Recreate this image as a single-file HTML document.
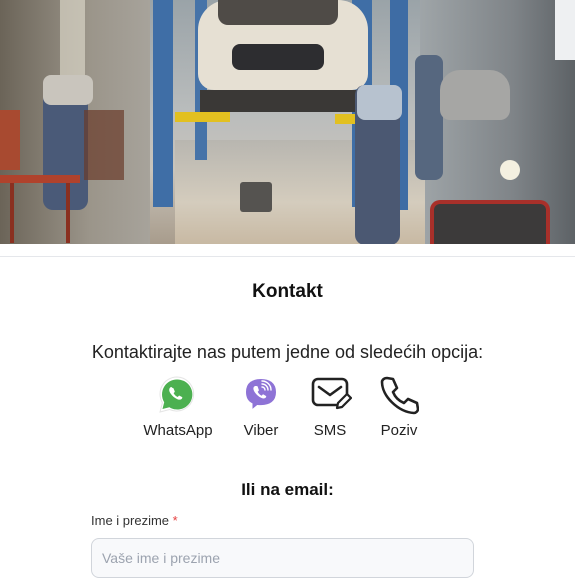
<!DOCTYPE html>
<html><head><meta charset="utf-8"><style>
*{margin:0;padding:0;box-sizing:border-box}
body{width:575px;height:555px;overflow:hidden;background:#fff;font-family:"Liberation Sans","DejaVu Sans",sans-serif;color:#111;position:relative}
.hero{position:absolute;left:0;top:0;width:575px;height:244px;overflow:hidden;background:linear-gradient(180deg,#9aa3a8 0%,#b9bcbc 45%,#c9c4bb 70%,#a89c8c 100%)}
.hero div{position:absolute}
.sep{position:absolute;left:0;top:256px;width:575px;height:1px;background:#e5e7eb}
.t{position:absolute;left:0;width:575px;text-align:center}
.ic{position:absolute;top:375px}
.lb{position:absolute;top:422px;font-size:15px;color:#222;text-align:center;width:90px}
</style></head><body>
<div class="hero">
  <div style="left:0;top:0;width:150px;height:244px;background:linear-gradient(90deg,#6b6458,#9b958a 60%,#a7a39b)"></div>
  <div style="left:60px;top:0;width:25px;height:80px;background:#d8d4c6;opacity:.7"></div>
  <div style="left:420px;top:0;width:155px;height:244px;background:linear-gradient(90deg,#9fa5a8,#7f8488 60%,#5d6266)"></div>
  <div style="left:175px;top:140px;width:250px;height:104px;background:linear-gradient(180deg,#b8b6b0,#d4ccbd 60%,#c8b9a3)"></div>
  <div style="left:153px;top:0;width:20px;height:207px;background:#3f6ea6"></div>
  <div style="left:195px;top:0;width:12px;height:160px;background:#4673a8"></div>
  <div style="left:352px;top:0;width:20px;height:207px;background:#3f6ea6"></div>
  <div style="left:390px;top:0;width:18px;height:210px;background:#3e6ca4"></div>
  <div style="left:198px;top:0;width:170px;height:90px;background:#e6e0d3;border-radius:30px 30px 16px 16px"></div>
  <div style="left:218px;top:0;width:120px;height:25px;background:#4f4b47;border-radius:0 0 10px 10px"></div>
  <div style="left:232px;top:44px;width:92px;height:26px;background:#2d2d30;border-radius:8px"></div>
  <div style="left:200px;top:90px;width:165px;height:22px;background:#3a3836"></div>
  <div style="left:175px;top:112px;width:55px;height:10px;background:#e2c020"></div>
  <div style="left:335px;top:114px;width:30px;height:10px;background:#e2c020"></div>
  <div style="left:43px;top:80px;width:45px;height:130px;background:#4a5a78;border-radius:10px"></div>
  <div style="left:43px;top:75px;width:50px;height:30px;background:#c9c5bd;border-radius:8px"></div>
  <div style="left:355px;top:85px;width:45px;height:160px;background:#4b5872;border-radius:10px"></div>
  <div style="left:357px;top:85px;width:45px;height:35px;background:#b7c2cf;border-radius:8px"></div>
  <div style="left:415px;top:55px;width:28px;height:125px;background:#56677f;border-radius:8px"></div>
  <div style="left:440px;top:70px;width:70px;height:50px;background:#a6a6a4;border-radius:20px 20px 10px 10px"></div>
  <div style="left:0;top:175px;width:80px;height:8px;background:#b0422c"></div>
  <div style="left:10px;top:183px;width:60px;height:60px;border-left:4px solid #8a3020;border-right:4px solid #8a3020"></div>
  <div style="left:0;top:110px;width:20px;height:60px;background:#a84a30"></div>
  <div style="left:240px;top:182px;width:32px;height:30px;background:#555350;border-radius:3px"></div>
  <div style="left:430px;top:200px;width:120px;height:44px;border:4px solid #a8302a;border-bottom:none;border-radius:10px 10px 0 0;background:#3c3a3a"></div>
  <div style="left:84px;top:110px;width:40px;height:70px;background:#6a3a2a;opacity:.7"></div>
  <div style="left:555px;top:0;width:20px;height:60px;background:#eef0f2"></div>
  <div style="left:500px;top:160px;width:20px;height:20px;background:#f4f0e0;border-radius:50%"></div>
</div>
<div class="sep"></div>
<div class="t" style="top:281px;font-size:19px;font-weight:bold">Kontakt</div>
<div class="t" style="top:342px;font-size:18px;color:#222">Kontaktirajte nas putem jedne od sledećih opcija:</div>

<svg class="ic" style="left:157px" width="40" height="40" viewBox="0 0 40 40">
<path d="M20 2a17 17 0 0 0-14.6 25.7L3 37l9.6-2.5A17 17 0 1 0 20 2z" fill="#fff" stroke="#e5e5e5"/>
<path d="M20 4.5a15 15 0 0 0-12.8 22.8L5.5 34l6.9-1.8A15 15 0 1 0 20 4.5z" fill="#4cb050"/>
<path d="M14.5 12c-.6 0-1.4.4-1.8 1.1-.8 1.3-.6 3.2.8 5.3 1.8 2.7 4.1 4.7 6.9 5.8 2 .8 3.6.5 4.5-.6.4-.5.5-1.2.3-1.5l-2.6-1.4c-.4-.2-.8 0-1 .3l-.8 1c-1.8-.7-3.300-2.1-4.2-3.9l.9-.9c.3-.3.3-.7.2-1l-1.2-2.8c-.2-.4-.6-.5-1.2-.5z" fill="#fff"/>
</svg>
<svg class="ic" style="left:241px" width="40" height="40" viewBox="0 0 40 40">
<path d="M20 3C11 3 4 7 4 17c0 6 2.5 10 6.5 12l0 7 6-5c1 .1 2.3.1 3.5.1 9 0 16-4 16-14S29 3 20 3z" fill="#8e73d6" stroke="#fff" stroke-width="2"/>
<path d="M14.5 11c-.6 0-1.4.4-1.7 1-.8 1.3-.4 3.2 1 5.3 1.8 2.6 4 4.600 6.8 5.7 1.9.8 3.4.5 4.3-.6.4-.5.4-1.1.1-1.4l-2.5-1.5c-.4-.2-.8-.1-1 .2l-.8 1c-1.8-.7-3.2-2.1-4-3.9l.9-.9c.3-.3.3-.7.2-1L16.6 11.4c-.2-.3-.7-.4-2.1-.4z" fill="#fff"/>
<path d="M21 9a6 6 0 0 1 6 6M21 12a3 3 0 0 1 3 3M21 6a9 9 0 0 1 9 9" stroke="#fff" stroke-width="1.4" fill="none" stroke-linecap="round"/>
</svg>
<svg class="ic" style="left:310px" width="42" height="40" viewBox="0 0 42 40">
<path d="M27 30H8a5 5 0 0 1-5-5V9a5 5 0 0 1 5-5h24a5 5 0 0 1 5 5v10" fill="none" stroke="#222" stroke-width="2.6" stroke-linecap="round"/>
<path d="M9 12l11 8 11-8" fill="none" stroke="#222" stroke-width="2.6" stroke-linecap="round" stroke-linejoin="round"/>
<path d="M27 33l1-5 9-9 4 4-9 9z" fill="none" stroke="#222" stroke-width="2.2" stroke-linejoin="round"/>
</svg>
<svg class="ic" style="left:379px" width="40" height="40" viewBox="0 0 40 40">
<path d="M8 3l6 1 4 9-4 4c2 5 6 9 11 11l4-4 9 4 1 6c0 2-2 4-4 4C19 37 3 21 3 7c0-2 2-4 5-4z" fill="none" stroke="#222" stroke-width="2.6" stroke-linejoin="round"/>
</svg>
<div class="lb" style="left:133px">WhatsApp</div>
<div class="lb" style="left:216px">Viber</div>
<div class="lb" style="left:285px">SMS</div>
<div class="lb" style="left:354px">Poziv</div>

<div class="t" style="top:480px;font-size:17px;font-weight:bold">Ili na email:</div>
<div style="position:absolute;left:91px;top:513px;font-size:13px;color:#333">Ime i prezime <span style="color:#e53e3e">*</span></div>
<div style="position:absolute;left:91px;top:538px;width:383px;height:40px;border:1px solid #d1d5db;border-radius:8px;background:#f8f9fb"></div>
<div style="position:absolute;left:102px;top:550px;font-size:14px;color:#9ca3af">Vaše ime i prezime</div>
</body></html>
